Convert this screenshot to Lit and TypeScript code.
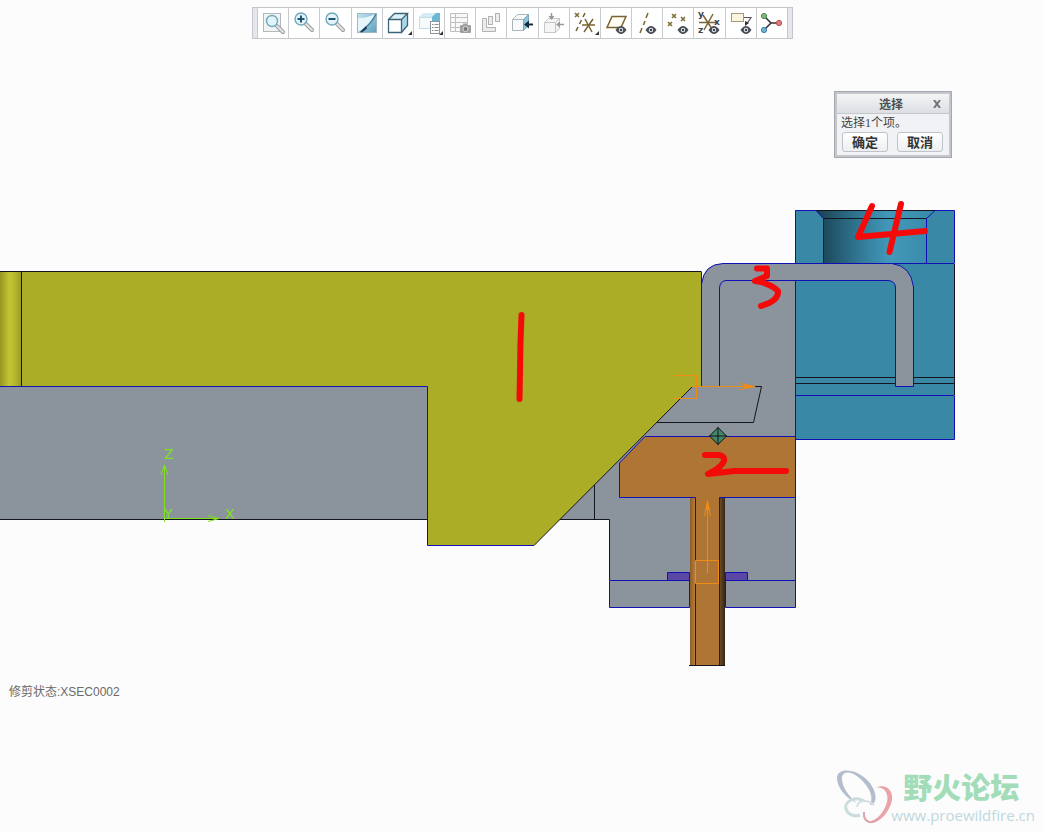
import { LitElement, html, css, svg } from "lit";
import { customElement } from "lit/decorators.js";

const lens = (x: number, y: number, r: number, mark: unknown) => svg`
  <path d="M${x + 5} ${y + 5}L${x + 11} ${y + 11}" stroke="#9b9d9f" stroke-width="4" stroke-linecap="round"/>
  <path d="M${x + 5} ${y + 5}L${x + 11} ${y + 11}" stroke="#e3e4e4" stroke-width="2" stroke-linecap="round"/>
  <circle cx=${x} cy=${y} r=${r} fill="#e2f4fa" stroke="#6fa9be" stroke-width="1.4"/>${mark}`;

const eye = (x: number, y: number) => svg`
  <path d="M${x - 5.5} ${y}Q${x} ${y - 8} ${x + 5.5} ${y}Q${x} ${y + 8} ${x - 5.5} ${y}Z" fill="#4a4e58"/>
  <circle cx=${x} cy=${y} r="2.2" fill="#e8ebf0"/><circle cx=${x} cy=${y} r="1.2" fill="#3a3e48"/>`;

const corner = svg`<path d="M29 23v4h-4z" fill="#333"/>`;

const cross = (x: number, y: number) => svg`
  <path d="M${x - 2} ${y - 2}l4 4m0-4l-4 4" stroke="#7d6a35" stroke-width="1.5"/>`;

const tools: { label: string; icon: unknown }[] = [
  { label: "重新调整", icon: svg`<rect x="5.500" y="5.500" width="17" height="18" fill="#f2f3f3" stroke="#b3b7b9"/>${lens(14, 13, 5.5, "")}` },
  { label: "放大", icon: lens(12, 11, 6, svg`<path d="M8.500 11h7M12 7.500v7" stroke="#21536f" stroke-width="2"/>`) },
  { label: "缩小", icon: lens(12, 11, 6, svg`<path d="M8.500 11h7" stroke="#21536f" stroke-width="2"/>`) },
  {
    label: "重画",
    icon: svg`<defs><linearGradient id="repaint" x1="0" y1="0" x2="1" y2="1"><stop offset="0" stop-color="#c2e6f0"/><stop offset="1" stop-color="#5f9fbb"/></linearGradient></defs>
      <rect x="5.500" y="5.500" width="19" height="19" fill="url(#repaint)" stroke="#9fb9c4"/>
      <path d="M6 10Q16 10 23 6Q20 15 12 20L6 24Z" fill="#e6f5fa"/>
      <path d="M24 6Q20 14 14 19" fill="none" stroke="#3f7f9d" stroke-width="1.500"/>
      <path d="M14 18L8 24l2 .5 5-4z" fill="#173b54"/>`,
  },
  {
    label: "显示样式",
    icon: svg`<path d="M5.500 11.500l6-6h13l-6 6z" fill="#d9f1f8"/><path d="M18.500 11.500l6-6v12l-6 7z" fill="#a9d9e8"/>
      <path d="M5.500 11.500h13v13h-13zM5.500 11.500l6-6h13l-6 6M24.500 5.500v12l-6 7" stroke="#3b6478" stroke-width="1.300"/>${corner}`,
  },
  {
    label: "已保存方向",
    icon: svg`<path d="M5 9l4-4h17v15H5z" fill="#d4edf5"/><path d="M5.500 9.500h13v11h-13z" fill="#f5fafc" stroke="#c3dbe4"/>
      <path d="M18 9l4-4h4v9h-8z" fill="#6cb8d4"/>
      <rect x="16.500" y="13.500" width="9" height="12" fill="#fff" stroke="#8f9496"/>
      <path d="M18 16.500h1.500m1 0h4M18 19.500h1.500m1 0h4M18 22.500h1.500m1 0h4" stroke="#858a8c"/>${corner}`,
  },
  {
    label: "视图管理器",
    icon: svg`<path d="M5.500 5.500h17v18h-17zM5.500 9.500h17M5.500 14.500h17M5.500 19.500h17M10.500 5.500v18" fill="#f8f8f8" stroke="#c0c0c0"/>
      <rect x="15" y="17" width="11" height="8" rx="1" fill="#a0a0a0"/><path d="M18 15.500h4v2h-4z" fill="#a0a0a0"/><circle cx="20.500" cy="21" r="2.500" fill="#777" stroke="#ddd"/>`,
  },
  {
    label: "剖面",
    icon: svg`<g fill="#ececec" stroke="#b3b3b3"><path d="M6.500 10.500h4v9h9v4h-13z"/><rect x="12.500" y="8.500" width="4" height="8"/><rect x="19.500" y="5.500" width="4" height="8"/></g>`,
  },
  {
    label: "激活视图",
    icon: svg`<path d="M5.500 11.500l5-5h11l-5 5v11h-11z" fill="#f7f9fa" stroke="#abb6bc"/><path d="M5.500 11.500h11" stroke="#abb6bc"/><path d="M16.500 11.500l5-5v11l-5 5z" fill="#8cc6dc" stroke="#7fa6b7"/>
      <path d="M26 16.500h-6" stroke="#172b3f" stroke-width="2"/><path d="M17 16.500l5-4v8z" fill="#172b3f"/>`,
  },
  {
    label: "透视图",
    icon: svg`<path d="M5.500 14.500l4-4h11l-4 4v10h-11zM5.500 14.500h11l4-4v10l-4 4" fill="#f5f5f5" stroke="#c6c6c6"/>
      <path d="M12.500 5v6M25 16.500h-6" stroke="#999" stroke-width="1.500"/><path d="M12.500 12l-3-4h6zM17 16.500l4-3v6z" fill="#999"/>`,
  },
  {
    label: "基准显示过滤器",
    icon: svg`${cross(7, 7)}<path d="M15 5l-2 4M11.500 12l-2 4M8 19l-2 4" stroke="#6d5a2e" stroke-width="1.500"/>
      <path d="M12 17h13M14 24L23 11M15 11l7 13" stroke="#7a6434" stroke-width="1.500"/>${corner}`,
  },
  { label: "平面显示", icon: svg`<path d="M11 8.500h14l-5 11h-14z" fill="#fffdf4" stroke="#7a6434" stroke-width="1.500"/>${eye(20, 22)}` },
  { label: "轴显示", icon: svg`<path d="M16 5l-2 5M13 13l-1.500 4M10 20l-2 5" stroke="#7a6434" stroke-width="1.500"/>${eye(19, 22)}` },
  { label: "点显示", icon: svg`${cross(11, 8)}${cross(20, 11)}${cross(7, 16)}${eye(20, 22)}` },
  {
    label: "坐标系显示",
    icon: svg`<path d="M5 14.500h17M10 22l9-16M9 7l9 14" stroke="#7a6434" stroke-width="1.500"/>
      <g class="axis-tag"><text x="4" y="9">y</text><text x="20" y="17">x</text><text x="4" y="25">z</text></g>${eye(20, 22)}`,
  },
  {
    label: "注释显示",
    icon: svg`<rect x="5.500" y="5.500" width="12" height="8" fill="#fbf5de" stroke="#a39a79"/>
      <path d="M18 9.500h7l-4 6" stroke="#555" stroke-width="1.200"/><path d="M19 18v-5l4 2z" fill="#333"/>${eye(20, 22)}`,
  },
  {
    label: "旋转中心",
    icon: svg`<path d="M7 8l7 7-6 6M14 15h7" stroke="#333" stroke-width="1.500"/>
      <circle cx="7" cy="8" r="2.600" fill="#7db97d" stroke="#4c8c50"/><circle cx="7" cy="22" r="2.600" fill="#72b3d6" stroke="#3c7ea4"/><circle cx="22" cy="15" r="2.600" fill="#e57c7c" stroke="#b54a4a"/>`,
  },
];

@customElement("model-toolbar")
class ModelToolbar extends LitElement {
  static styles = css`
    :host { display: block; width: 541px; max-width: 100%; }
    .bar { display: flex; box-sizing: border-box; height: 32px; border: 1px solid #c3c6cb; background: #fff; }
    .grip { flex: none; width: 4px; background: #e6e7eb; }
    .tool { flex: 1; min-width: 0; padding: 0; border: 0; border-left: 1px solid #c9cbce; background: #fff; display: flex; }
    .end { border-left: 1px solid #c3c6cb; }
    .icon { display: block; width: 30px; height: 30px; flex: none; }
    .axis-tag text { font: bold 9px "DejaVu Sans", sans-serif; fill: #444; }
  `;
  render() {
    return html`<div class="bar" role="toolbar" aria-label="视图工具">
      <span class="grip"></span>
      ${tools.map((t) => html`<button class="tool" aria-label=${t.label}>
        <svg class="icon" viewBox="0 0 30 30" fill="none" aria-hidden="true">${t.icon}</svg></button>`)}
      <span class="grip end"></span>
    </div>`;
  }
}

@customElement("select-dialog")
class SelectDialog extends LitElement {
  static styles = css`
    :host { display: block; box-sizing: border-box; border: 1px solid #a5a9ae; background: #c3c6ca; padding: 2px;
      font: 12px/16px "Liberation Serif", "Noto Sans CJK SC", sans-serif; color: #333; }
    .head { display: grid; grid-template-columns: 20px 1fr 24px; align-items: end; height: 20px;
      background: linear-gradient(#f4f5f6, #dcdee2); border-bottom: 1px solid #c4c7cc; box-sizing: border-box; }
    .title { grid-column: 2; margin: 0; text-align: center; font: bold 12px/18px "Noto Sans CJK SC", sans-serif; color: #4b4e52; }
    .close { border: 0; padding: 0; background: none; height: 18px; display: grid; place-items: center; }
    .body { background: #f0f2f5; padding: 0 6px 3px 4px; }
    .message { margin: 0; line-height: 18px; color: #444; }
    .actions { display: flex; justify-content: space-between; margin-left: 1px; }
    .action { width: 46px; height: 20px; padding: 0; border: 1px solid #bfc2c7; border-radius: 3px;
      background: linear-gradient(#fff, #eceef0); font: bold 13px/18px "Noto Sans CJK SC", sans-serif; color: #333; }
  `;
  render() {
    return html`<section role="dialog" aria-labelledby="title">
      <header class="head">
        <h2 class="title" id="title">选择</h2>
        <button class="close" aria-label="关闭"><svg width="8" height="8" viewBox="0 0 8 8"><path d="M1 0l6 8M7 0L1 8" stroke="#6f7276" stroke-width="2"/></svg></button>
      </header>
      <div class="body">
        <p class="message">选择1个项。</p>
        <div class="actions"><button class="action">确定</button><button class="action">取消</button></div>
      </div>
    </section>`;
  }
}

@customElement("section-view")
class SectionView extends LitElement {
  static styles = css`
    :host { display: block; }
    .scene { display: block; width: 100%; height: auto; }
    .steel { fill: #8b939c; }
    .wedge { fill: #acad26; }
    .bolt { fill: #af7534; }
    .block { fill: #3988a6; }
    .washer { fill: #5a48a4; }
    .cut { fill: none; stroke: #1010b4; }
    .edge { fill: none; stroke: #15151f; }
    .datum { fill: none; stroke: #f08c14; }
    .datum-tip { fill: #f08c14; }
    .axis { fill: none; stroke: #7fe01c; }
    .axis-name { fill: #7fe01c; font: 14px "DejaVu Sans", sans-serif; }
    .ink { fill: none; stroke: #f50a0a; stroke-width: 6; stroke-linecap: round; stroke-linejoin: round; }
  `;
  render() {
    return html`<svg class="scene" viewBox="0 0 1044 832" role="img" aria-label="XSEC0002">
      <defs>
        <linearGradient id="round"><stop offset="0" stop-color="#96961f"/><stop offset=".45" stop-color="#c4c536"/><stop offset=".75" stop-color="#b3b42b"/><stop offset="1" stop-color="#9b9b28"/></linearGradient>
        <linearGradient id="bore"><stop offset="0" stop-color="#193f50"/><stop offset=".2" stop-color="#265f76"/><stop offset=".45" stop-color="#3784a2"/><stop offset=".62" stop-color="#4399ba"/><stop offset="1" stop-color="#3788a7"/></linearGradient>
        <linearGradient id="shade"><stop offset="0" stop-color="#6b4a25"/><stop offset="1" stop-color="#33261a"/></linearGradient>
        <linearGradient id="light"><stop offset="0" stop-color="#8d5e2b"/><stop offset="1" stop-color="#b67c3a"/></linearGradient>
      </defs>

      <path class="steel" d="M0 386H428V519H0z"/>
      <path class="steel" d="M558 519.500H609.500V607.500H795.500V264H723Q702 264 702 285V375z"/>
      <path class="edge" d="M0 519.500H428M558 519.500H609.500V580M594.500 485V519"/>

      <path class="wedge" d="M0 271.500H701.500V387H692L534 545.500H427.500V386.500H0z"/>
      <path fill="url(#round)" d="M0 272H21V386H0z"/>
      <path class="edge" d="M0 271.500H701.500M21.500 272V386M692 387L534 545.500"/>
      <path class="cut" d="M701.500 272V386M534 545.500H427.500V386.500H0"/>

      <path class="block" d="M795.500 210.500h159v229h-159z"/>
      <path fill="url(#bore)" d="M816 210.500H935L926.500 218.500V263.500H823.500V218.500z"/>
      <path class="edge" d="M816 210.500H935M823 218.500H927M796 377.500H954M796 383.500H954M954.500 264V395"/>
      <path class="cut" d="M816 210.500H795.500V439.500H954.500V395.500M935 210.500H954.500V263.500M816 210.500L823.500 218.500V263M935 210.500L926.500 218.500V263M796 263.500H954M796 395.500H954"/>

      <path class="steel" d="M702 386V284Q704 264 723 263.500H892Q911 266 913.500 287V386.500H895.500V287Q895 281 888 280.500H726Q720 281 719.500 288V386z"/>
      <path class="cut" d="M701.500 386V284Q704 264 723 263.500H892Q911 266 913.500 287V386.500H895.500V287Q895 281 888 280.500H726Q720 281 719.500 288V386"/>
      <path class="edge" d="M692 386.500H761.500L753.500 422.500H657"/>

      <path class="bolt" d="M645 436.500H795.500V497.500H725V665H690V497.500H619.500V463z"/>
      <path fill="url(#light)" d="M690 498h5v167h-5z"/>
      <path fill="url(#shade)" d="M720 498h5v167h-5z"/>
      <path class="washer" d="M667.500 572.500h22v8h-22zM725.500 572.500h22v8h-22z" stroke="#1010b4"/>
      <path class="cut" d="M645 436.500H795.500V497.500H719.500V665M695.500 665V497.500H619.500V463L645 436.500"/>
      <path class="cut" d="M689.500 573V607.500H609.500V580.500H689M725.500 573V607.500H795.500V580.500H726"/>
      <path class="edge" d="M689 665.500H725"/>
      <path class="cut" d="M795.500 281V607"/>

      <path class="datum" d="M673.500 375.500h23v23h-23zM692 386.500H754M695.500 560.500h23v23h-23zM707.500 573V500M740 383.500L755 386.500L740 389.500M704.500 516L707.500 501L710.500 516"/>
      <path class="datum-tip" d="M756 386.500L744 384.500V388.500zM707.500 500L705.500 510H709.500z"/>

      <path d="M718 427.500L726.500 436L718 444.500L709.500 436z" fill="#438668" stroke="#111"/>
      <path class="edge" d="M718 427V445M709 436H727"/>

      <path class="axis" d="M164.500 522V465M161 475L164.500 465L168 475M164 518.500H219M208 515.500L219 518.500L208 521.500"/>
      <text class="axis-name" x="164" y="459">Z</text>
      <text class="axis-name" x="164" y="519">Y</text>
      <text class="axis-name" x="225" y="519">X</text>

      <g class="ink">
        <path d="M521.500 315L520.500 342L519.500 399"/>
        <path d="M705 455H719Q725 456 724 461Q721 468 708 474L734 471H786"/>
        <path d="M757 268.500H767V276L755 281Q770 283 778 291Q779 301 761 306"/>
        <path d="M872 206L858 237L925 231M901 204L889.500 252"/>
      </g>
    </svg>`;
  }
}

@customElement("forum-mark")
class ForumMark extends LitElement {
  static styles = css`
    :host { display: block; }
    .mark { display: flex; align-items: flex-start; text-decoration: none; }
    .rings { flex: none; width: 58px; height: 60px; }
    .words { display: flex; flex-direction: column; margin-left: -2px; }
    .name { padding-left: 12px; font: 900 29px/36px "Noto Sans CJK SC", sans-serif; color: #a3dcb9; }
    .site { padding-top: 1px; font: 15px/20px "Open Sans", sans-serif; color: #bfd8dc; }
  `;
  render() {
    return html`<a class="mark" href="http://www.proewildfire.cn">
      <svg class="rings" viewBox="0 0 58 60" aria-hidden="true">
        <path fill-rule="evenodd" fill="#b3bdcb" d="M2 10C2 -1 22 0 34 14C44 26 41 37 35 37C38 30 36 24 31 17C21 4 9 1 7 9C6 17 13 28 22 35C10 30 2 19 2 10z"/>
        <path fill="none" stroke="#cbdcdc" stroke-width="3" d="M29 33C18 27 9 35 11 41C13 47 20 49 25 47"/>
        <path fill="none" stroke="#d5dfe3" stroke-width="2" d="M22 39C23 32 32 31 39 37"/>
        <path fill="#eba3aa" d="M40 20C53 14 60 25 56 36C50 51 40 57 33 54C43 52 49 44 52 34C54 24 48 18 40 20z"/>
        <path fill="none" stroke="#dca4ae" stroke-width="2" d="M29 44C28 54 36 57 43 51"/>
      </svg>
      <span class="words"><span class="name">野火论坛</span><span class="site">www.proewildfire.cn</span></span>
    </a>`;
  }
}

@customElement("app-root")
class AppRoot extends LitElement {
  static styles = css`
    :host { display: block; background: #fcfcfc; }
    .workspace { display: grid; min-height: 100vh; overflow: hidden; }
    .view, .overlay { grid-area: 1 / 1; min-width: 0; }
    .overlay { position: relative; display: flex; flex-direction: column; align-items: center; padding: 7px 0 0 1px; }
    .dialog { position: absolute; top: 91px; right: 92px; width: 118px; }
    .foot { display: flex; justify-content: space-between; align-self: stretch; margin-top: auto; padding: 0 9px 4px 8px; }
    .state { margin: 0; font: 12px/16px "Liberation Sans", "Noto Sans CJK SC", sans-serif; color: #6a6a6a; }
    .forum { margin-top: 84px; }
  `;
  render() {
    return html`<main class="workspace">
      <section-view class="view"></section-view>
      <div class="overlay">
        <model-toolbar></model-toolbar>
        <select-dialog class="dialog"></select-dialog>
        <footer class="foot">
          <p class="state">修剪状态:XSEC0002</p>
          <forum-mark class="forum"></forum-mark>
        </footer>
      </div>
    </main>`;
  }
}
